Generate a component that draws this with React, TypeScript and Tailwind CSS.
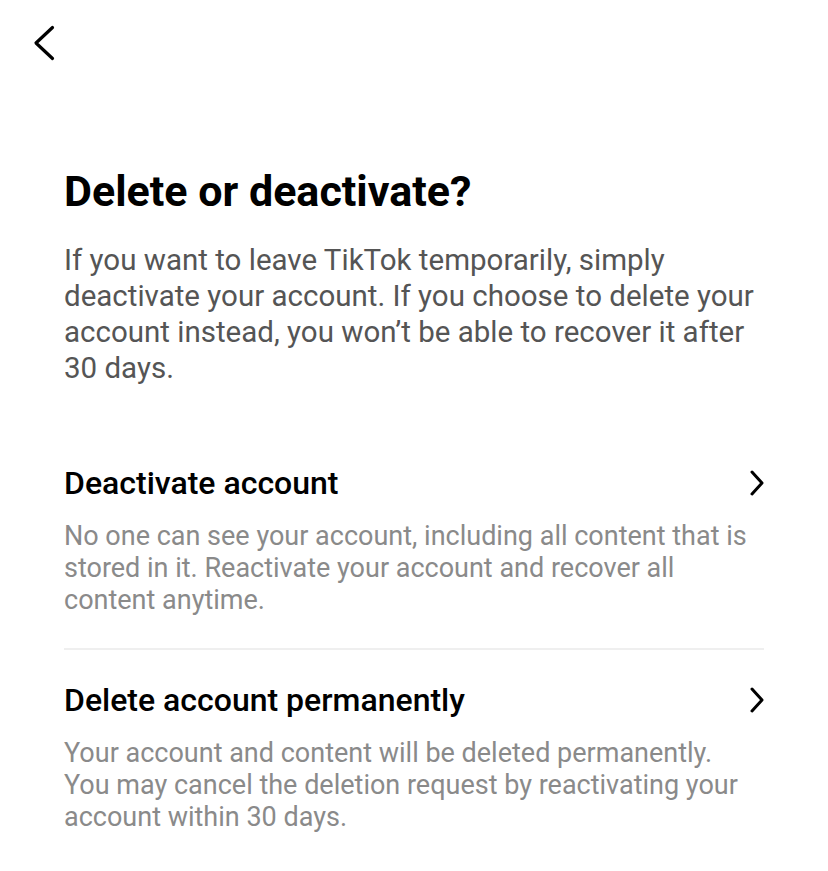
import React from 'react';

const BackIcon = () => (
  <svg viewBox="0 0 24 36" className="w-[24px] h-[36px]" fill="none" stroke="#000" strokeWidth={3.2} strokeLinecap="round" strokeLinejoin="round">
    <path d="M20.5 2.5 L4 18 L20.5 33.5" />
  </svg>
);

const NextIcon = () => (
  <svg viewBox="0 0 14 26" className="w-[14px] h-[26px]" fill="none" stroke="#000" strokeWidth={3} strokeLinecap="round" strokeLinejoin="round">
    <path d="M2 2 L12 13 L2 24" />
  </svg>
);

const Lines = ({ lines }: { lines: string[] }) => (
  <>
    {lines.map((l, i) => (
      <span key={i} className="block whitespace-nowrap">{l}</span>
    ))}
  </>
);

const Option = ({ title, desc }: { title: string; desc: string[] }) => (
  <div className="flex flex-col">
    <div className="flex items-center justify-between">
      <h2 className="text-[32px] leading-[40px] font-medium text-black">{title}</h2>
      <NextIcon />
    </div>
    <p className="mt-[17px] text-[27px] leading-[32px] text-[#8a8a8a]">
      <Lines lines={desc} />
    </p>
  </div>
);

export default function App() {
  return (
    <div className="min-h-screen bg-white" style={{ fontFamily: 'Roboto, "Liberation Sans", sans-serif' }}>
      <div className="pt-[25px] pl-[32px]">
        <BackIcon />
      </div>
      <div className="px-[64px] pt-[104px]">
        <h1 className="text-[43px] leading-[52px] font-bold text-black">Delete or deactivate?</h1>
        <p className="mt-[25px] text-[29.5px] leading-[36px] text-[#555]">
          <Lines
            lines={[
              'If you want to leave TikTok temporarily, simply',
              'deactivate your account. If you choose to delete your',
              'account instead, you won’t be able to recover it after',
              '30 days.',
            ]}
          />
        </p>
        <div className="mt-[77px]">
          <Option
            title="Deactivate account"
            desc={[
              'No one can see your account, including all content that is',
              'stored in it. Reactivate your account and recover all',
              'content anytime.',
            ]}
          />
          <div className="mt-[32px] mb-[30px] h-[2px] bg-[#efefef]" />
          <Option
            title="Delete account permanently"
            desc={[
              'Your account and content will be deleted permanently.',
              'You may cancel the deletion request by reactivating your',
              'account within 30 days.',
            ]}
          />
        </div>
      </div>
    </div>
  );
}
